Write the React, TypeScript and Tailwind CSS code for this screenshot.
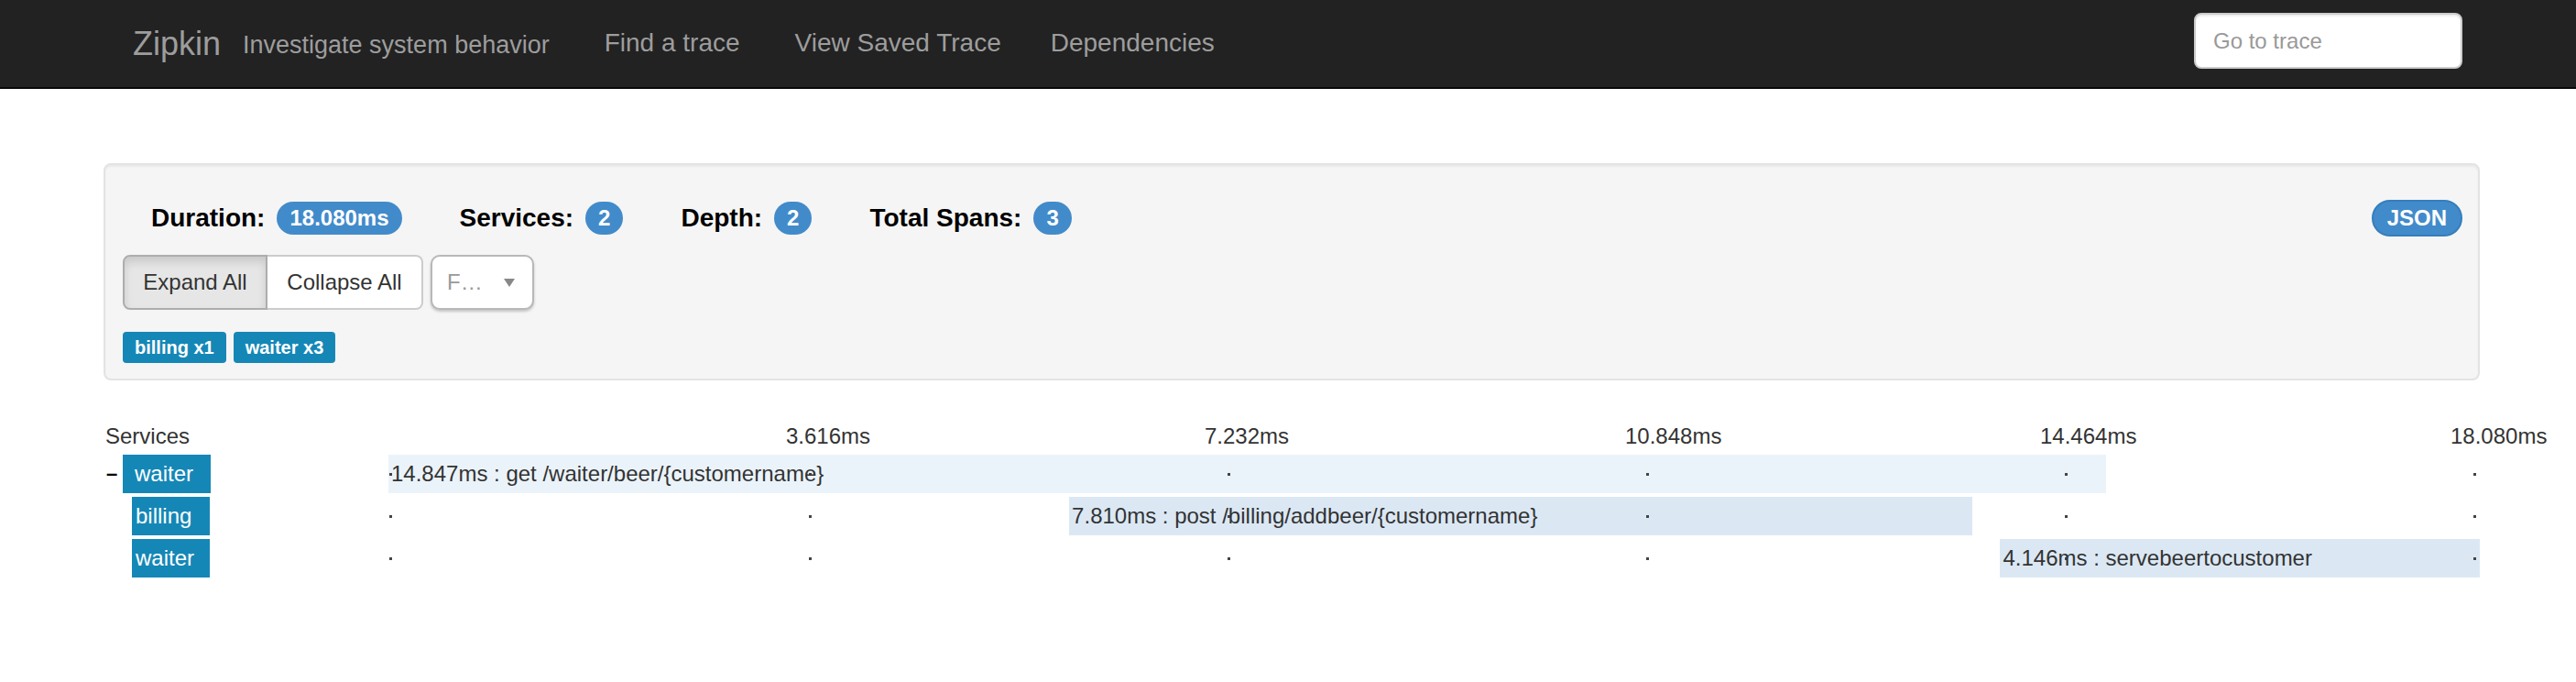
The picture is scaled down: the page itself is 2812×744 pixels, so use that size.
import React from "react";

const TOTAL = 18.08;

const ticks = [
  { label: "3.616ms", cls: "left-[434px]" },
  { label: "7.232ms", cls: "left-[891px]" },
  { label: "10.848ms", cls: "left-[1350px]" },
  { label: "14.464ms", cls: "left-[1803px]" },
  { label: "18.080ms", cls: "left-[2251px]" },
];

const dots = [
  "left-[1px]",
  "left-[459px]",
  "left-[916px]",
  "left-[1373px]",
  "left-[1830px]",
  "left-[2276px]",
];

type Span = {
  service: string;
  root: boolean;
  start: number;
  dur: number;
  label: string;
};

const spans: Span[] = [
  { service: "waiter", root: true, start: 0, dur: 14.847, label: "14.847ms : get /waiter/beer/{customername}" },
  { service: "billing", root: false, start: 5.885, dur: 7.81, label: "7.810ms : post /billing/addbeer/{customername}" },
  { service: "waiter", root: false, start: 13.934, dur: 4.146, label: "4.146ms : servebeertocustomer" },
];

function Stat({ label, value, first }: { label: string; value: string; first?: boolean }) {
  return (
    <div className={`flex items-center ${first ? "" : "ml-[63px]"}`}>
      <span className="text-[28px] font-bold text-black">{label}</span>
      <span className="ml-[13px] h-[36px] px-[14px] rounded-full bg-[#428bca] text-white font-bold text-[24px] leading-[36px]">
        {value}
      </span>
    </div>
  );
}

export default function App() {
  return (
    <div className="font-['Liberation_Sans',Arial,sans-serif] bg-white min-h-[744px] text-[#333]">
      {/* Navbar */}
      <nav className="flex h-[97px] bg-[#222222] border-b-2 border-[#080808]">
        <div className="flex items-center pl-[145px] h-[95px] text-[#9d9d9d]">
          <span className="text-[36px] leading-[40px]">Zipkin</span>
          <span className="ml-[24px] text-[27px] leading-[40px] mt-[2px]">Investigate system behavior</span>
          <span className="ml-[60px] text-[28px] leading-[40px] -mt-[2px]">Find a trace</span>
          <span className="ml-[60px] text-[28px] leading-[40px] -mt-[2px]">View Saved Trace</span>
          <span className="ml-[54px] text-[28px] leading-[40px] -mt-[2px]">Dependencies</span>
        </div>
        <div className="ml-auto mr-[124px] mt-[14px]">
          <div className="w-[293px] h-[61px] bg-white rounded-[8px] border-2 border-[#ccc] shadow-[inset_0_2px_2px_rgba(0,0,0,0.075)] flex items-center pl-[19px] text-[24px] text-[#999]">
            Go to trace
          </div>
        </div>
      </nav>

      {/* Summary panel */}
      <div className="mt-[81px] ml-[113px] w-[2594px] h-[237px] border-2 border-[#e3e3e3] rounded-[8px] bg-[#f5f5f5] shadow-[inset_0_2px_2px_rgba(0,0,0,0.05)] pt-[38px] pl-[19px] pr-[17px]">
        <div className="flex items-center justify-between h-[40px]">
          <div className="flex items-center pl-[31px]">
            <Stat label="Duration:" value="18.080ms" first />
            <Stat label="Services:" value="2" />
            <Stat label="Depth:" value="2" />
            <Stat label="Total Spans:" value="3" />
          </div>
          <div className="h-[40px] px-[15px] border-2 border-[#357ebd] rounded-full bg-[#428bca] text-white font-bold text-[24px] leading-[36px]">
            JSON
          </div>
        </div>

        <div className="mt-[20px] flex h-[60px]">
          <div className="flex h-full">
            <div className="w-[158px] h-full flex items-center justify-center border-2 border-[#adadad] rounded-l-[8px] bg-[#e6e6e6] shadow-[inset_0_6px_10px_rgba(0,0,0,0.125)] text-[24px] text-[#333]">
              Expand All
            </div>
            <div className="w-[170px] h-full flex items-center justify-center border-2 border-l-0 border-[#ccc] rounded-r-[8px] bg-white text-[24px] text-[#333]">
              Collapse All
            </div>
          </div>
          <div className="ml-[8px] w-[113px] h-full flex items-center border-2 border-[#b8b8b8] rounded-[10px] bg-white shadow-[0_2px_3px_rgba(0,0,0,0.2)] pl-[16px]">
            <span className="text-[24px] text-[#999]">F…</span>
            <svg className="ml-[23px]" width="12" height="9" viewBox="0 0 12 9">
              <polygon points="0,0 12,0 6,9" fill="#888" />
            </svg>
          </div>
        </div>

        <div className="mt-[24px] flex gap-[8px]">
          <span className="h-[34px] px-[13px] rounded-[4px] bg-[#1587b6] text-white font-bold text-[20px] leading-[34px]">billing x1</span>
          <span className="h-[34px] px-[13px] rounded-[4px] bg-[#1587b6] text-white font-bold text-[20px] leading-[34px]">waiter x3</span>
        </div>
      </div>

      {/* Timeline */}
      <div className="mt-[45px] ml-[113px] w-[2594px]">
        <div className="flex h-[32px] items-center">
          <div className="w-[311px] pl-[2px] text-[24px] leading-[32px] text-[#333]">Services</div>
          <div className="relative flex-1 h-full">
            {ticks.map((t) => (
              <span key={t.label} className={`absolute top-0 ${t.cls} text-[24px] leading-[32px] text-[#333] whitespace-nowrap`}>
                {t.label}
              </span>
            ))}
          </div>
        </div>

        <div className="mt-[4px] flex flex-col gap-[4px]">
          {spans.map((s, i) => (
            <div key={i} className="flex h-[42px]">
              <div className="w-[311px] h-full flex items-center">
                {s.root ? (
                  <>
                    <span className="w-[21px] pl-[3px] text-[22px] font-bold text-black leading-none">–</span>
                    <span className="w-[96px] h-full flex items-center pl-[13px] bg-[#1587b6] text-white text-[24px]">
                      {s.service}
                    </span>
                  </>
                ) : (
                  <span className="ml-[31px] w-[85px] h-full flex items-center pl-[4px] bg-[#1587b6] text-white text-[24px]">
                    {s.service}
                  </span>
                )}
              </div>
              <div className="relative flex-1 h-full">
                <div
                  className={`absolute top-0 h-full ${s.root ? "bg-[#ebf3fa]" : "bg-[#dbe8f4]"}`}
                  style={{ left: `${(s.start / TOTAL) * 100}%`, width: `${(s.dur / TOTAL) * 100}%` }}
                />
                {dots.map((d) => (
                  <div key={d} className={`absolute top-[20px] ${d} w-[3px] h-[3px] bg-[#444]`} />
                ))}
                <span
                  className="absolute top-0 h-full flex items-center pl-[3px] text-[24px] text-[#333] whitespace-nowrap"
                  style={{ left: `${(s.start / TOTAL) * 100}%` }}
                >
                  {s.label}
                </span>
              </div>
            </div>
          ))}
        </div>
      </div>
    </div>
  );
}
